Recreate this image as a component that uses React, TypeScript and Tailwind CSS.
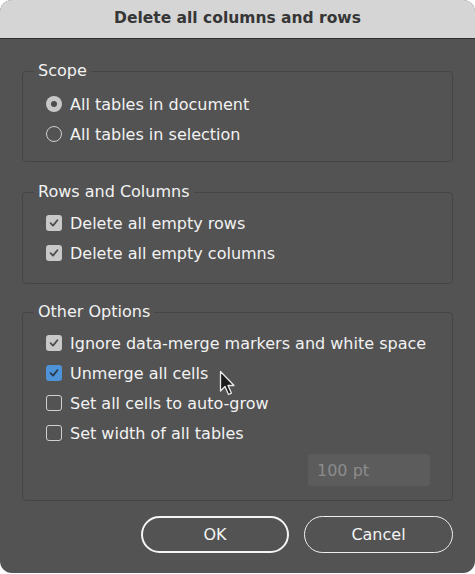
import React from 'react'

function CheckMark({ color }: { color: string }) {
  return (
    <svg width="10" height="10" viewBox="0 0 10 10">
      <path d="M1.6 5.2 L4 7.6 L8.4 2.2" fill="none" stroke={color} strokeWidth="1.8" strokeLinecap="round" strokeLinejoin="round" />
    </svg>
  )
}

function Checkbox({ state }: { state: 'on' | 'blue' | 'off' }) {
  if (state === 'off') {
    return <span className="w-[16px] h-[16px] rounded-[3px] border-[1.5px] border-[#d0d0d0] shrink-0" />
  }
  return (
    <span
      className={
        state === 'blue'
          ? 'w-[16px] h-[16px] rounded-[3px] bg-[#4e92d8] flex items-center justify-center shrink-0'
          : 'w-[16px] h-[16px] rounded-[3px] bg-[#c8c8c8] flex items-center justify-center shrink-0'
      }
    >
      <CheckMark color={state === 'blue' ? '#2b3a4a' : '#4d4d4d'} />
    </span>
  )
}

function Radio({ checked }: { checked: boolean }) {
  if (checked) {
    return (
      <span className="w-[16px] h-[16px] rounded-full bg-[#c8c8c8] flex items-center justify-center shrink-0">
        <span className="w-[6px] h-[6px] rounded-full bg-[#4d4d4d]" />
      </span>
    )
  }
  return <span className="w-[16px] h-[16px] rounded-full border-[1.5px] border-[#d0d0d0] shrink-0" />
}

function Row({ control, label }: { control: React.ReactNode; label: string }) {
  return (
    <div className="h-[30px] flex items-center gap-[8px]">
      {control}
      <span className="pt-[2px]">{label}</span>
    </div>
  )
}

export default function App() {
  const fieldsetClass = 'border border-[#454545] rounded-[4px] pl-[23px] pr-[22px]'
  const legendClass = 'ml-[-12px] px-[4px] leading-[20px]'

  return (
    <div className="w-[475px] h-[574px] bg-white">
      <div className="relative h-[573px] w-[475px] rounded-[12px] overflow-hidden bg-[#535353] flex flex-col font-['DejaVu_Sans','Open_Sans',sans-serif] text-[16px] text-[#f2f2f2]">
        {/* title bar */}
        <div className="h-[39px] shrink-0 bg-[#d5d5d5] border-b border-[#2f2f2f] flex items-center justify-center font-bold text-[#363636] text-[15.5px]">
          Delete all columns and rows
        </div>

        <div className="px-[22px] pt-[22px]">
          {/* Scope */}
          <fieldset className={`${fieldsetClass} pt-[8px] pb-[12px]`}>
            <legend className={legendClass}>Scope</legend>
            <Row control={<Radio checked />} label="All tables in document" />
            <Row control={<Radio checked={false} />} label="All tables in selection" />
          </fieldset>

          {/* Rows and Columns */}
          <fieldset className={`${fieldsetClass} mt-[20px] pt-[6px] pb-[15px]`}>
            <legend className={legendClass}>Rows and Columns</legend>
            <Row control={<Checkbox state="on" />} label="Delete all empty rows" />
            <Row control={<Checkbox state="on" />} label="Delete all empty columns" />
          </fieldset>

          {/* Other Options */}
          <fieldset className={`${fieldsetClass} mt-[18px] pt-[6px] pb-[14px]`}>
            <legend className={legendClass}>Other Options</legend>
            <Row control={<Checkbox state="on" />} label="Ignore data-merge markers and white space" />
            <Row control={<Checkbox state="blue" />} label="Unmerge all cells" />
            <Row control={<Checkbox state="off" />} label="Set all cells to auto-grow" />
            <Row control={<Checkbox state="off" />} label="Set width of all tables" />
            <div className="flex justify-end mt-[6px]">
              <div className="w-[122px] h-[32px] rounded-[3px] bg-[#5c5c5c] flex items-center pl-[9px] pt-[2px] text-[#8c8c8c]">
                100 pt
              </div>
            </div>
          </fieldset>

          {/* buttons */}
          <div className="flex justify-end gap-[15px] mt-[15px]">
            <button className="w-[148px] h-[37px] rounded-full border-[2.5px] border-[#f4f4f4] text-[#f4f4f4] pt-[1px]">OK</button>
            <button className="w-[149px] h-[37px] rounded-full border-[1.5px] border-[#f0f0f0] text-[#f4f4f4] pt-[1px]">Cancel</button>
          </div>
        </div>

        {/* mouse pointer */}
        <svg className="absolute left-[219px] top-[370px]" width="18" height="27" viewBox="0 0 18 27">
          <path
            d="M1.5 1.5 L1.5 21 L6 16.5 L9.5 24.5 L12.5 23.2 L9 15.5 L15 15.5 Z"
            fill="#1c1c1c"
            stroke="#e8e8e8"
            strokeWidth="1.3"
            strokeLinejoin="round"
          />
        </svg>
      </div>
    </div>
  )
}
